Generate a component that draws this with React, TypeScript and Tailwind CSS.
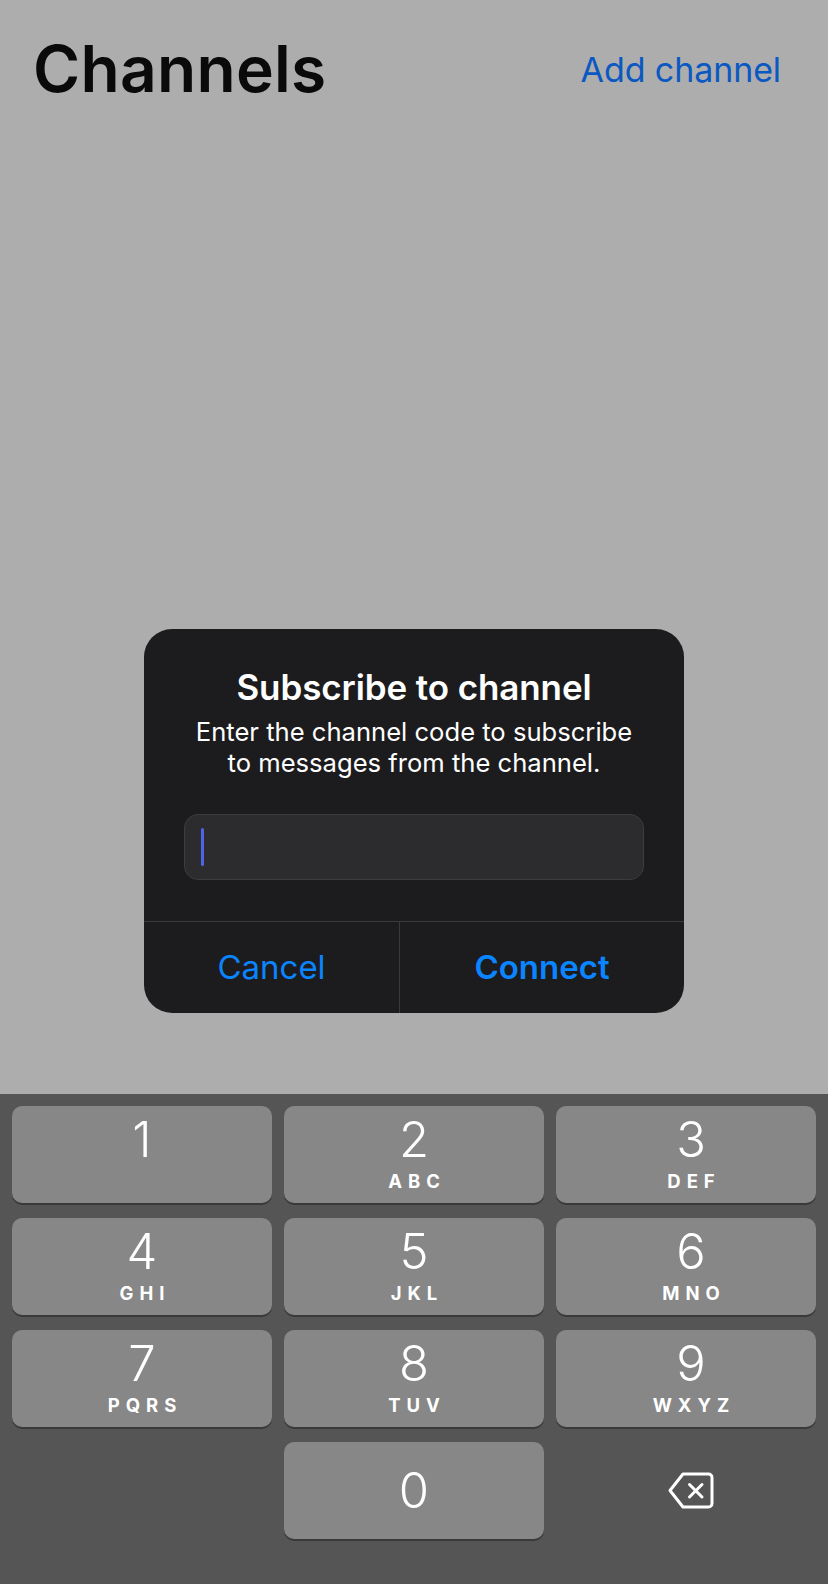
import React from "react";

const keys: { d: string; l?: string; c: number }[] = [
  { d: "1", c: 0 },
  { d: "2", l: "ABC", c: 1 },
  { d: "3", l: "DEF", c: 2 },
  { d: "4", l: "GHI", c: 0 },
  { d: "5", l: "JKL", c: 1 },
  { d: "6", l: "MNO", c: 2 },
  { d: "7", l: "PQRS", c: 0 },
  { d: "8", l: "TUV", c: 1 },
  { d: "9", l: "WXYZ", c: 2 },
];

function Key({ d, l, c }: { d: string; l?: string; c: number }) {
  return (
    <div
      className={
        "h-[97px] rounded-[10px] bg-[#878787] shadow-[0_2px_0_#3a3a3a] flex flex-col items-center pt-[9px] text-white " +
        (c === 2 ? "pl-[10px]" : "")
      }
    >
      <div className="text-[49px] leading-[50px] font-light">{d}</div>
      {l ? (
        <div className="mt-[6px] text-[18.5px] leading-[20px] font-bold tracking-[6px] pl-[6px]">{l}</div>
      ) : null}
    </div>
  );
}

function Backspace() {
  return (
    <svg width="46" height="37" viewBox="0 0 46 37" fill="none" stroke="white" strokeWidth="3" strokeLinejoin="round" strokeLinecap="round">
      <path d="M15 2 H40.5 A3.5 3.5 0 0 1 44 5.5 V31.5 A3.5 3.5 0 0 1 40.5 35 H15 L2 18.5 Z" />
      <path d="M21.5 12.5 L34 25 M34 12.5 L21.5 25" />
    </svg>
  );
}

export default function App() {
  return (
    <div
      className="w-[828px] h-[1584px] flex flex-col bg-[#adadad] overflow-hidden"
      style={{ fontFamily: "Inter, 'Noto Sans', sans-serif" }}
    >
      <div className="h-[1094px] flex flex-col">
        <div className="flex justify-between items-start pt-[31px] pl-[33px] pr-[47px]">
          <div className="text-[64px] leading-[76px] font-semibold text-[#0a0a0a] tracking-[0.3px]">Channels</div>
          <div className="mt-[19px] text-[34px] leading-[40px] text-[#0a58c2] tracking-[-0.1px]">Add channel</div>
        </div>

        <div className="mt-[522px] mx-auto w-[540px] h-[384px] rounded-[28px] bg-[#1c1c1e] flex flex-col overflow-hidden">
          <div className="flex flex-col items-center pt-[38px] px-[40px]">
            <div className="text-[35px] leading-[40px] font-semibold text-white tracking-[-0.1px]">Subscribe to channel</div>
            <div className="mt-[9px] text-[25.6px] leading-[31px] text-white text-center">
              Enter the channel code to subscribe
              <br />
              to messages from the channel.
            </div>
            <div className="mt-[36px] w-[460px] h-[66px] rounded-[14px] bg-[#2c2c2e] border border-[#3d3d40] flex items-center pl-[16px]">
              <div className="w-[3px] h-[38px] rounded-full bg-[#4a66e6]" />
            </div>
          </div>
          <div className="mt-auto h-[92px] border-t border-[#3a3a3c] flex">
            <div className="w-[255px] flex items-center justify-center text-[33px] text-[#0a84ff]">Cancel</div>
            <div className="w-px bg-[#3a3a3c]" />
            <div className="flex-1 flex items-center justify-center text-[33px] font-semibold text-[#0a84ff]">Connect</div>
          </div>
        </div>
      </div>

      <div className="flex-1 bg-[#555555] px-[12px] pt-[12px]">
        <div className="grid grid-cols-3 gap-x-[12px] gap-y-[15px]">
          {keys.map((k) => (
            <Key key={k.d} d={k.d} l={k.l} c={k.c} />
          ))}
          <div />
          <div className="h-[97px] rounded-[10px] bg-[#878787] shadow-[0_2px_0_#3a3a3a] flex items-center justify-center text-white text-[49px] leading-[50px] font-light">
            0
          </div>
          <div className="h-[97px] flex items-center justify-center pl-[10px]">
            <Backspace />
          </div>
        </div>
      </div>
    </div>
  );
}
